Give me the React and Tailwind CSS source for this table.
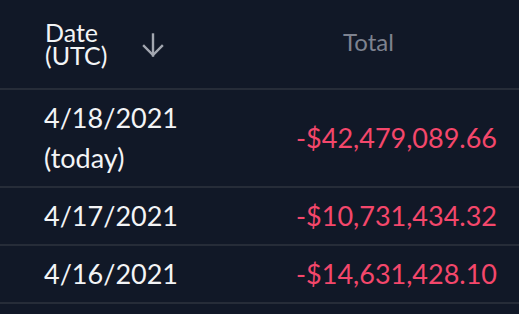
import React from 'react';

const rows = [
  { date: '4/18/2021', note: '(today)', total: '-$42,479,089.66' },
  { date: '4/17/2021', total: '-$10,731,434.32' },
  { date: '4/16/2021', total: '-$14,631,428.10' },
];

// Flecha de orden descendente
const SortArrow = () => (
  <svg width="22" height="24" viewBox="0 0 22 24" fill="none" stroke="currentColor" strokeWidth="2.4" strokeLinecap="square">
    <path d="M11 1.5v21" />
    <path d="M2 13l9 9 9-9" />
  </svg>
);

export default function App() {
  return (
    <div className="w-[519px] h-[314px] bg-[#111827] text-[#f3f4f6] font-['Lato',sans-serif] overflow-hidden">
      {/* Cabecera */}
      <div className="grid grid-cols-[240px_1fr] h-[90px] border-b-2 border-[#262c38]">
        <div className="flex items-center pl-[45px]">
          <div className="text-[25px] leading-[23px] w-[97px]">
            <div>Date</div>
            <div>(UTC)</div>
          </div>
          <span className="text-[#a3a7b0] mt-[2px]">
            <SortArrow />
          </span>
        </div>
        <div className="flex items-center justify-center pr-[22px] pb-[4px] text-[24px] text-[#7d828f]">
          Total
        </div>
      </div>

      {/* Filas */}
      {rows.map((row) => (
        <div key={row.date} className="grid grid-cols-[240px_1fr] border-b-2 border-[#262c38] py-[8px]">
          <div className="pl-[44px] text-[27px] leading-[40px]">
            <div>{row.date}</div>
            {row.note && <div>{row.note}</div>}
          </div>
          <div className="flex items-center justify-end pr-[22px] text-[27px] leading-[40px] text-[#f4476b]">
            {row.total}
          </div>
        </div>
      ))}
    </div>
  );
}
